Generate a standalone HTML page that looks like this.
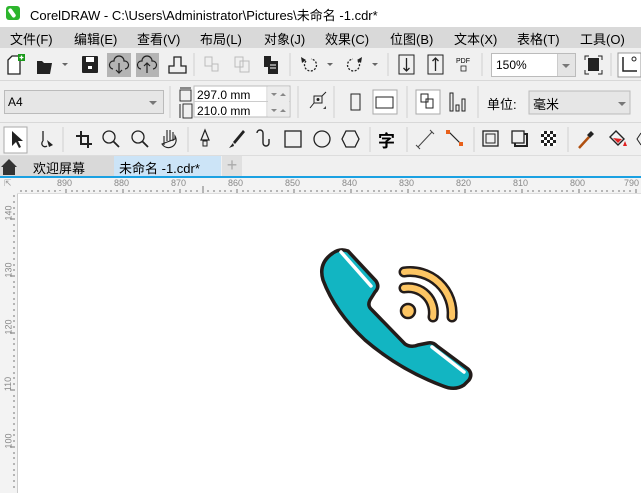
<!DOCTYPE html>
<html><head><meta charset="utf-8"><style>
*{margin:0;padding:0;box-sizing:border-box}
body{width:641px;height:493px;overflow:hidden;position:relative;background:#fff;font-family:"Liberation Sans","Noto Sans CJK SC",sans-serif;font-size:12px;color:#000}
.a{position:absolute}
.sep{position:absolute;width:1px;background:#d0d0d0}
.ic{position:absolute}
.menu span{position:absolute;top:2px;font-size:13px}
.rt{position:absolute;top:178px;font-size:9px;color:#888}
.lt{position:absolute;left:1px;font-size:9px;color:#888;transform:rotate(-90deg);transform-origin:center}
</style></head><body>
<!-- title -->
<div class="a" style="left:0;top:0;width:641px;height:27px;background:#fff"></div>
<div class="a" style="left:6px;top:6px;width:14px;height:14px;border-radius:3px;background:#2db52d"></div>
<div class="a" style="left:10px;top:8px;width:4px;height:10px;background:#fff;transform:rotate(-35deg);border-radius:2px"></div>
<div class="a" style="left:30px;top:5px;font-size:13px">CorelDRAW - C:\Users\Administrator\Pictures\未命名 -1.cdr*</div>
<!-- menu -->
<div class="a menu" style="left:0;top:27px;width:641px;height:21px;background:#d9d9d9">
<span style="left:10px">文件(F)</span><span style="left:74px">编辑(E)</span><span style="left:137px">查看(V)</span><span style="left:200px">布局(L)</span><span style="left:264px">对象(J)</span><span style="left:325px">效果(C)</span><span style="left:390px">位图(B)</span><span style="left:454px">文本(X)</span><span style="left:517px">表格(T)</span><span style="left:580px">工具(O)</span>
</div>
<!-- toolbar1 -->
<div class="a" style="left:0;top:48px;width:641px;height:33px;background:#f0f0f0;border-bottom:1px solid #d8d8d8"></div>
<svg class="ic" style="left:0;top:48px" width="641" height="33">
<path d="M8 12 L12 8 H20 V26 H8 Z" fill="#fff" stroke="#222" stroke-width="1.3"/><rect x="18" y="6" width="7" height="7" fill="#1a9a1a"/><path d="M21.5 7.5v4M19.5 9.5h4" stroke="#fff" stroke-width="1.3"/>
<path d="M37 13 H42 L44 15 H52 L50 26 H37 Z" fill="#222"/><path d="M62 15 l3 3 3-3z" fill="#666"/>
<rect x="82" y="8" width="16" height="17" rx="1" fill="#222"/><rect x="86" y="9" width="8" height="5" fill="#fff"/><rect x="88" y="18" width="4" height="3" fill="#fff"/>
<rect x="107" y="5" width="24" height="24" fill="#b4b4b4"/><rect x="136" y="5" width="23" height="24" fill="#b4b4b4"/>
<path d="M113 21 a4 4 0 0 1 1-8 a5 5 0 0 1 10 0 a4 4 0 0 1 1 8" fill="none" stroke="#222" stroke-width="1.2"/><path d="M119 15v10m-3-3 3 3 3-3" fill="none" stroke="#222" stroke-width="1.2"/>
<path d="M141 21 a4 4 0 0 1 1-8 a5 5 0 0 1 10 0 a4 4 0 0 1 1 8" fill="none" stroke="#222" stroke-width="1.2"/><path d="M147 25v-10m-3 3 3-3 3 3" fill="none" stroke="#222" stroke-width="1.2"/>
<path d="M169 25 V18 H174 V9 H181 V18 H186 V25 Z" fill="none" stroke="#222" stroke-width="1.3"/>
<line x1="194" y1="5" x2="194" y2="28" stroke="#d0d0d0"/>
<g stroke="#bbb" fill="none"><rect x="205" y="9" width="7" height="9"/><rect x="212" y="16" width="6" height="7"/><rect x="235" y="9" width="8" height="10"/><rect x="240" y="13" width="9" height="11"/></g>
<rect x="264" y="8" width="7" height="11" fill="#222"/><rect x="268" y="13" width="10" height="13" fill="#222"/><path d="M270 17h6m-6 3h6" stroke="#fff"/>
<line x1="290" y1="5" x2="290" y2="28" stroke="#d0d0d0"/>
<path d="M306 13 a6 6 0 1 0 5 -2" fill="none" stroke="#222" stroke-width="1.3" stroke-dasharray="2 1.5"/><path d="M301 9 l5 3 -4 3z" fill="#222"/><path d="M327 15 l3 3 3-3z" fill="#666"/>
<path d="M358 13 a6 6 0 1 1 -5 -2" fill="none" stroke="#222" stroke-width="1.3" stroke-dasharray="2 1.5"/><path d="M362 9 l-5 3 4 3z" fill="#222"/><path d="M372 15 l3 3 3-3z" fill="#666"/>
<line x1="388" y1="5" x2="388" y2="28" stroke="#d0d0d0"/>
<rect x="399" y="7" width="15" height="19" fill="none" stroke="#222"/><path d="M406.5 10v13m-3-3 3 3 3-3" fill="none" stroke="#222" stroke-width="1.3"/>
<rect x="428" y="7" width="15" height="19" fill="none" stroke="#222"/><path d="M435.5 23v-13m-3 3 3-3 3 3" fill="none" stroke="#222" stroke-width="1.3"/>
<text x="456" y="15" font-size="7" font-family="Liberation Sans">PDF</text><rect x="461" y="18" width="5" height="5" fill="none" stroke="#222" stroke-width=".8"/>
<line x1="482" y1="5" x2="482" y2="28" stroke="#d0d0d0"/>
<rect x="588" y="10" width="11" height="13" fill="#222"/><path d="M585 12v-4h4M602 12v-4h-4M585 22v4h4M602 22v4h-4" fill="none" stroke="#222"/>
<line x1="611" y1="5" x2="611" y2="28" stroke="#d0d0d0"/>
<rect x="618" y="5" width="23" height="24" fill="#fff" stroke="#999"/><path d="M623 9v14h14" fill="none" stroke="#222" stroke-width="1.5"/><circle cx="634" cy="11" r="2" fill="none" stroke="#222"/>
</svg>
<div class="a" style="left:491px;top:53px;width:85px;height:24px;background:#fff;border:1px solid #bbb"><span style="position:absolute;left:4px;top:4px;font-size:12px">150%</span><div style="position:absolute;right:0;top:0;width:18px;height:22px;background:#e4e4e4;border-left:1px solid #ccc"></div><div style="position:absolute;right:5px;top:10px;border:4px solid transparent;border-top:4px solid #777"></div></div>
<!-- toolbar2 -->
<div class="a" style="left:0;top:81px;width:641px;height:42px;background:#f0f0f0;border-bottom:1px solid #d8d8d8"></div>
<div class="a" style="left:4px;top:90px;width:160px;height:24px;background:#e6e6e6;border:1px solid #bbb"><span style="position:absolute;left:3px;top:4px">A4</span><div style="position:absolute;right:6px;top:10px;border:4px solid transparent;border-top:4px solid #777"></div></div>
<svg class="ic" style="left:0;top:81px" width="641" height="42">
<line x1="170" y1="5" x2="170" y2="37" stroke="#d0d0d0"/>
<rect x="180" y="9" width="11" height="11" fill="none" stroke="#222" stroke-width=".9"/><path d="M180 7h11" stroke="#222"/>
<rect x="183" y="23" width="9" height="14" fill="none" stroke="#222" stroke-width=".9"/><path d="M180 23v14" stroke="#222"/>
<rect x="194" y="5" width="96" height="31" fill="#fff" stroke="#bbb"/><path d="M194 20.5h96M267 5v31" stroke="#ccc"/><rect x="268" y="6" width="21" height="29" fill="#ececec"/>
<path d="M271 12l3 3 3-3zM286 15l-3-3-3 3z M271 28l3 3 3-3zM286 31l-3-3-3 3z" fill="#888"/>
<text x="197" y="18" font-size="12" font-family="Liberation Sans">297.0 mm</text><text x="197" y="34" font-size="12" font-family="Liberation Sans">210.0 mm</text>
<line x1="298" y1="5" x2="298" y2="37" stroke="#d0d0d0"/>
<rect x="314" y="15" width="8" height="7" fill="none" stroke="#222"/><circle cx="318" cy="18.5" r="1.5" fill="#222"/><path d="M310 27l4-5M322 15l4-4" stroke="#222"/><path d="M323 28l3-3v3z" fill="#444"/>
<line x1="334" y1="5" x2="334" y2="37" stroke="#d0d0d0"/>
<rect x="351" y="13" width="9" height="16" fill="none" stroke="#222"/>
<rect x="373" y="9" width="24" height="24" fill="#fff" stroke="#aaa"/><rect x="376" y="16" width="17" height="11" fill="none" stroke="#222"/>
<line x1="407" y1="5" x2="407" y2="37" stroke="#d0d0d0"/>
<rect x="416" y="9" width="24" height="24" fill="#fff" stroke="#aaa"/><rect x="421" y="13" width="7" height="8" fill="none" stroke="#222"/><rect x="426" y="18" width="7" height="9" fill="none" stroke="#222"/>
<rect x="450" y="12" width="3" height="18" fill="none" stroke="#222"/><rect x="456" y="24" width="3" height="6" fill="none" stroke="#222"/><rect x="462" y="18" width="3" height="12" fill="none" stroke="#222"/>
<line x1="478" y1="5" x2="478" y2="37" stroke="#d0d0d0"/>
<rect x="529" y="10" width="101" height="23" fill="#e6e6e6" stroke="#bbb"/><path d="M618 21l4 4 4-4z" fill="#777"/>
</svg>
<div class="a" style="left:487px;top:94px;font-size:13px">单位:</div>
<div class="a" style="left:533px;top:94px;font-size:13px">毫米</div>
<!-- toolbox -->
<div class="a" style="left:0;top:123px;width:641px;height:33px;background:#f0f0f0;border-bottom:1px solid #ddd"></div>
<svg class="ic" style="left:0;top:123px" width="641" height="33">
<rect x="4" y="4" width="23" height="26" fill="#fff" stroke="#aaa"/><path d="M12 8v15l4-4 3 6 2-1-3-6h5z" fill="#222"/>
<path d="M43 8v10m0 0a3 3 0 0 0 4 5" fill="none" stroke="#222" stroke-width="1.3"/><path d="M47 17l6 5-4 2z" fill="#222"/>
<line x1="63" y1="4" x2="63" y2="29" stroke="#d0d0d0"/>
<path d="M81 8v13h11M76 13h12v12" fill="none" stroke="#222" stroke-width="2"/>
<circle cx="109" cy="14" r="6" fill="none" stroke="#222" stroke-width="1.3"/><path d="M113 18l6 6" stroke="#222" stroke-width="1.8"/>
<circle cx="138" cy="14" r="6" fill="none" stroke="#222" stroke-width="1.3"/><path d="M142 18l6 6" stroke="#222" stroke-width="1.8"/>
<path d="M164 22v-9m3 5v-11m3 11v-11m3 11v-9m2 7v-3a6 6 0 0 1 -13 8z" fill="none" stroke="#222" stroke-width="1.1"/>
<line x1="188" y1="4" x2="188" y2="29" stroke="#d0d0d0"/>
<path d="M205 7l-4 10h8z" fill="none" stroke="#222" stroke-width="1.2"/><rect x="203" y="18" width="4" height="5" fill="none" stroke="#222"/>
<path d="M243 7l-10 12 2 2 10-12z M233 20l-4 5 5-2z" fill="#222"/>
<path d="M257 10a3 3 0 0 1 6 0v10a3 3 0 0 0 6 0v-4" fill="none" stroke="#222" stroke-width="1.4"/>
<rect x="285" y="8" width="16" height="16" fill="none" stroke="#222" stroke-width="1.3"/>
<circle cx="322" cy="16" r="8" fill="none" stroke="#222" stroke-width="1.3"/>
<path d="M346 8h9l4 8-4 8h-9l-4-8z" fill="none" stroke="#222" stroke-width="1.3"/>
<line x1="370" y1="4" x2="370" y2="29" stroke="#d0d0d0"/>
<text x="378" y="24" font-size="17" font-weight="bold" font-family="Noto Sans CJK SC">字</text>
<line x1="407" y1="4" x2="407" y2="29" stroke="#d0d0d0"/>
<path d="M418 24l14-15" stroke="#444"/><path d="M416 22l4 4M430 7l4 4" stroke="#444"/>
<path d="M449 9l12 12" stroke="#222" stroke-width="1.2"/><rect x="446" y="7" width="4" height="4" fill="#e8601a"/><rect x="459" y="19" width="4" height="4" fill="#e8601a"/>
<line x1="474" y1="4" x2="474" y2="29" stroke="#d0d0d0"/>
<rect x="483" y="8" width="15" height="15" fill="none" stroke="#222" stroke-width="1.3"/><rect x="486" y="11" width="9" height="9" fill="none" stroke="#222"/>
<rect x="512" y="8" width="12" height="12" fill="none" stroke="#222" stroke-width="1.3"/><path d="M524 11h3v12h-12v-3" fill="none" stroke="#222" stroke-width="2"/>
<rect x="541" y="8" width="15" height="15" fill="#222"/><g fill="#fff"><rect x="541" y="8" width="3" height="3"/><rect x="547" y="8" width="3" height="3"/><rect x="553" y="8" width="3" height="3"/><rect x="544" y="11" width="3" height="3"/><rect x="550" y="11" width="3" height="3"/><rect x="541" y="14" width="3" height="3"/><rect x="547" y="14" width="3" height="3"/><rect x="553" y="14" width="3" height="3"/><rect x="544" y="17" width="3" height="3"/><rect x="550" y="17" width="3" height="3"/><rect x="541" y="20" width="3" height="3"/><rect x="547" y="20" width="3" height="3"/><rect x="553" y="20" width="3" height="3"/></g>
<line x1="568" y1="4" x2="568" y2="29" stroke="#d0d0d0"/>
<path d="M579 25l10-11" stroke="#b05010" stroke-width="2.5"/><path d="M587 12l4-4 3 3-4 4z" fill="#222"/>
<path d="M616 8l8 8-6 6-8-8z" fill="none" stroke="#222" stroke-width="1.4"/><path d="M613 15l5 5 4-4z" fill="#e02020"/><path d="M625 18l2 5h-4z" fill="#e02020"/>
<path d="M641 10l-4 6 4 6" fill="none" stroke="#222"/>
</svg>
<!-- tabs -->
<div class="a" style="left:0;top:156px;width:641px;height:20px;background:#f0f0f0"></div>
<div class="a" style="left:0;top:156px;width:114px;height:20px;background:#d9d9d9"></div>
<svg class="ic" style="left:0;top:158px" width="20" height="18"><path d="M1 9L9 1l8 8h-2v8H3V9z" fill="#333"/></svg>
<div class="a" style="left:33px;top:158px;font-size:13px">欢迎屏幕</div>
<div class="a" style="left:114px;top:156px;width:107px;height:20px;background:#cce4f7"></div>
<div class="a" style="left:119px;top:158px;font-size:13px">未命名 -1.cdr*</div>
<div class="a" style="left:222px;top:156px;width:20px;height:20px;background:#e0e0e0;color:#aaa;font-size:18px;text-align:center;line-height:19px">+</div>
<div class="a" style="left:0;top:176px;width:641px;height:2px;background:#1ba1e2"></div>
<!-- rulers -->
<div class="a" style="left:0;top:178px;width:641px;height:16px;background:#f3f3f3"></div>
<div class="a" style="left:0;top:178px;width:17px;height:315px;background:#f3f3f3"></div>
<div class="a" style="left:17px;top:194px;width:1px;height:299px;background:#ccc"></div>
<div class="a" style="left:17px;top:193px;width:624px;height:1px;background:#ddd"></div>
<div class="a" style="left:4px;top:178px;font-size:9px;color:#999">⇱</div>
<svg class="ic" style="left:0;top:178px" width="641" height="16">
<g stroke="#777">
<path d="M21 12v2M26 12v2M32 12v2M38 12v2M43 12v2M49 12v2M55 12v2M60 12v1M66 11v4M72 12v2M77 12v2M83 12v2M89 12v2M94 12v2M100 12v2M106 12v2M111 12v2M117 12v2M123 11v4M129 12v2M134 12v2M140 12v2M146 12v2M151 12v2M157 12v2M163 12v2M168 12v2M174 12v2M180 11v4M186 12v2M191 12v2M197 12v2M203 8v7M208 12v2M214 12v2M220 12v2M225 12v2M231 12v2M237 11v4M243 12v2M248 12v2M254 12v2M260 12v2M265 12v2M271 12v2M277 12v2M282 12v2M288 12v2M294 11v4M300 12v2M305 12v2M311 12v2M317 12v2M322 12v2M328 12v2M334 12v2M340 12v2M345 12v2M351 11v4M357 12v2M362 12v2M368 12v2M374 12v2M379 12v2M385 12v2M391 12v2M396 12v2M402 12v2M408 11v4M414 12v2M419 12v2M425 12v2M431 12v2M436 12v2M442 12v2M448 12v2M453 12v2M459 12v2M465 11v4M471 12v2M476 12v2M482 12v2M488 12v2M493 12v2M499 12v2M505 12v2M510 12v2M516 12v2M522 11v4M528 12v2M533 12v2M539 12v2M545 12v2M550 12v2M556 12v2M562 12v2M567 12v2M573 12v2M579 11v4M585 12v2M590 12v2M596 12v2M602 12v2M607 12v2M613 12v2M619 12v2M624 12v2M630 12v2M636 11v4"/>
</g></svg>
<div class="rt" style="left:57px">890</div><div class="rt" style="left:114px">880</div><div class="rt" style="left:171px">870</div><div class="rt" style="left:228px">860</div><div class="rt" style="left:285px">850</div><div class="rt" style="left:342px">840</div><div class="rt" style="left:399px">830</div><div class="rt" style="left:456px">820</div><div class="rt" style="left:513px">810</div><div class="rt" style="left:570px">800</div><div class="rt" style="left:624px">790</div>
<svg class="ic" style="left:0;top:194px" width="17" height="299">
<g stroke="#777"><path d="M13 2h2M13 8h2M13 14h2M13 20h2M10 25h5M13 31h2M13 37h2M13 42h2M13 48h2M13 54h2M13 59h2M13 65h2M13 71h2M13 76h2M10 82h5M13 88h2M13 93h2M13 99h2M13 105h2M13 110h2M13 116h2M13 122h2M13 127h2M13 133h2M10 139h5M13 145h2M13 150h2M13 156h2M13 162h2M13 167h2M13 173h2M13 179h2M13 184h2M13 190h2M10 196h5M13 202h2M13 207h2M13 213h2M13 219h2M13 224h2M13 230h2M13 236h2M13 241h2M13 247h2M10 253h5M13 259h2M13 264h2M13 270h2M13 276h2M13 281h2M13 287h2M13 293h2"/></g></svg>
<div class="lt" style="top:208px">140</div><div class="lt" style="top:265px">130</div><div class="lt" style="top:322px">120</div><div class="lt" style="top:379px">110</div><div class="lt" style="top:436px">100</div>
<!-- phone -->
<svg class="ic" style="left:0;top:0" width="641" height="493">
<path d="M333 253 Q340 248 348 251 L376 281 Q380 287 375 292 L370 300 Q367 306 372 310 L405 344 Q411 348 418 345 L428 343 Q433 342 437 346 L468 369 Q473 374 469 380 L464 385 Q455 391 443 386 Q400 370 365 340 Q335 312 323 280 Q318 263 333 253 Z" fill="#12b5c2" stroke="#231c1a" stroke-width="3.5" stroke-linejoin="round"/>
<path d="M341 252 L371 286" stroke="#fff" stroke-width="3.5" stroke-linecap="round"/>
<path d="M432 347 L464 372" stroke="#fff" stroke-width="3.5" stroke-linecap="round"/>
<g fill="none" stroke-linecap="round">
<path d="M404 288 A25 25 0 0 1 433 317" stroke="#231c1a" stroke-width="11"/>
<path d="M404 288 A25 25 0 0 1 433 317" stroke="#fdc563" stroke-width="6"/>
<path d="M404 272 A42 42 0 0 1 452 317" stroke="#231c1a" stroke-width="11"/>
<path d="M404 272 A42 42 0 0 1 452 317" stroke="#fdc563" stroke-width="6"/>
</g>
<circle cx="408" cy="311" r="7" fill="#fdc563" stroke="#231c1a" stroke-width="2.5"/>
</svg>
</body></html>
